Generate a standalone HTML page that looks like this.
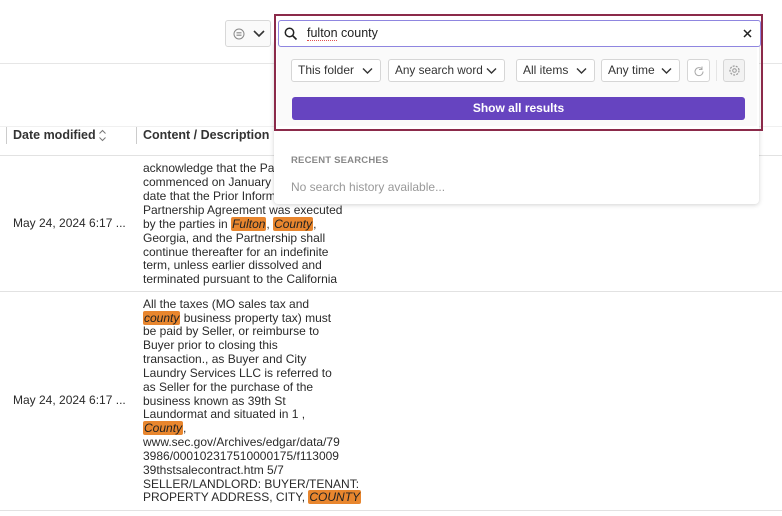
<!DOCTYPE html>
<html><head><style>
*{margin:0;padding:0;box-sizing:border-box}
body{width:782px;height:516px;background:#fff;font-family:"Liberation Sans",sans-serif;color:#2a2a2a;position:relative;overflow:hidden;font-size:12px}
.a{position:absolute}
.hl{background:#e8862e;font-style:italic;border-radius:2px;padding:0 1px;color:#222}
.ln{position:absolute;left:143px;white-space:nowrap;font-size:12px;line-height:14px}
.btn{position:absolute;top:59px;height:23px;border:1px solid #d6d6d6;border-radius:3px;background:#fff;font-size:12px;line-height:21px;padding-left:6px;color:#333;white-space:nowrap}
.btn svg{position:absolute;right:7px;top:7px}
</style></head><body>
<div class="a" style="left:0;top:63px;width:782px;height:1px;background:#e6e6e6"></div>
<div class="a" style="left:225px;top:20px;width:46px;height:27px;border:1px solid #d8d8d8;border-radius:3px;background:#fafafa">
<svg class="a" style="left:7px;top:7px" width="12" height="12"><circle cx="6" cy="6" r="5" fill="none" stroke="#888" stroke-width="1"/><path d="M3.5 4.5h5M3.5 6h5M3.5 7.5h5" stroke="#888" stroke-width=".8"/></svg>
<svg class="a" style="left:27px;top:8px" width="12" height="10"><path d="M1 2l5 5 5-5" fill="none" stroke="#333" stroke-width="1.6"/></svg></div>
<div class="a" style="left:0;top:126px;width:782px;height:1px;background:#f0f0f0"></div>
<div class="a" style="left:6px;top:127px;width:1px;height:17px;background:#ccc"></div>
<div class="a" style="left:136px;top:127px;width:1px;height:17px;background:#ccc"></div>
<div class="a" style="left:13px;top:128px;font-weight:bold;font-size:12.5px;color:#333">Date modified</div>
<svg class="a" style="left:98px;top:129px" width="9" height="13"><path d="M1.5 4.5l3-3 3 3M1.5 8.5l3 3 3-3" fill="none" stroke="#777" stroke-width="1"/></svg>
<div class="a" style="left:143px;top:128px;font-weight:bold;font-size:12.5px;color:#333">Content / Description</div>
<div class="a" style="left:0;top:155px;width:782px;height:1px;background:#e2e2e2"></div>
<div class="a" style="left:0;top:291px;width:782px;height:1px;background:#e2e2e2"></div>
<div class="a" style="left:0;top:510px;width:782px;height:1px;background:#e2e2e2"></div>
<div class="a" style="left:13px;top:216px;font-size:12px">May 24, 2024 6:17 ...</div>
<div class="a" style="left:13px;top:393px;font-size:12px">May 24, 2024 6:17 ...</div>
<div class="ln" style="top:161px">acknowledge that the Partnership</div>
<div class="ln" style="top:175px">commenced on January 1</div>
<div class="ln" style="top:189px">date that the Prior Information</div>
<div class="ln" style="top:203px">Partnership Agreement was executed</div>
<div class="ln" style="top:217px">by the parties in <span class="hl">Fulton</span>, <span class="hl">County</span>,</div>
<div class="ln" style="top:231px">Georgia, and the Partnership shall</div>
<div class="ln" style="top:245px">continue thereafter for an indefinite</div>
<div class="ln" style="top:258px">term, unless earlier dissolved and</div>
<div class="ln" style="top:272px">terminated pursuant to the California</div>
<div class="ln" style="top:297px">All the taxes (MO sales tax and</div>
<div class="ln" style="top:311px"><span class="hl">county</span> business property tax) must</div>
<div class="ln" style="top:324px">be paid by Seller, or reimburse to</div>
<div class="ln" style="top:338px">Buyer prior to closing this</div>
<div class="ln" style="top:352px">transaction., as Buyer and City</div>
<div class="ln" style="top:366px">Laundry Services LLC is referred to</div>
<div class="ln" style="top:380px">as Seller for the purchase of the</div>
<div class="ln" style="top:394px">business known as 39th St</div>
<div class="ln" style="top:407px">Laundormat and situated in 1 ,</div>
<div class="ln" style="top:421px"><span class="hl">County</span>,</div>
<div class="ln" style="top:435px">www.sec.gov/Archives/edgar/data/79</div>
<div class="ln" style="top:449px">3986/000102317510000175/f113009</div>
<div class="ln" style="top:463px">39thstsalecontract.htm 5/7</div>
<div class="ln" style="top:477px">SELLER/LANDLORD: BUYER/TENANT:</div>
<div class="ln" style="top:490px">PROPERTY ADDRESS, CITY, <span class="hl">COUNTY</span></div>
<!-- dropdown -->
<div class="a" style="left:274px;top:40px;width:485px;height:164px;background:#fff;border-radius:4px;box-shadow:0 1px 5px rgba(0,0,0,.18)"></div>
<div class="a" style="left:277px;top:42px;width:480px;height:84px;background:#fafafa"></div>
<div class="a" style="left:291px;top:155px;font-size:9.5px;font-weight:bold;color:#888;letter-spacing:.2px">RECENT SEARCHES</div>
<div class="a" style="left:291px;top:180px;font-size:12px;color:#999">No search history available...</div>
<div class="a" style="left:278px;top:20px;width:483px;height:27px;border:1px solid #8f86e0;border-radius:3px;background:#fff"></div>
<svg class="a" style="left:284px;top:27px" width="14" height="14"><circle cx="5.5" cy="5.5" r="4.2" fill="none" stroke="#222" stroke-width="1.5"/><path d="M8.5 8.5l4 4" stroke="#222" stroke-width="1.6"/></svg>
<div class="a" style="left:307px;top:26px;font-size:12.5px;color:#222">fulton county</div>
<div class="a" style="left:307px;top:40px;width:30px;border-bottom:1px dotted #e05050"></div>
<svg class="a" style="left:743px;top:29px" width="9" height="9"><path d="M1 1l7 7M8 1l-7 7" stroke="#222" stroke-width="1.5"/></svg>
<div class="btn" style="left:291px;width:90px">This folder<svg width="11" height="8"><path d="M1 1.5l4.5 4.5 4.5-4.5" fill="none" stroke="#333" stroke-width="1.4"/></svg></div>
<div class="btn" style="left:388px;width:117px;font-size:11.8px">Any search word<svg width="11" height="8"><path d="M1 1.5l4.5 4.5 4.5-4.5" fill="none" stroke="#333" stroke-width="1.4"/></svg></div>
<div class="btn" style="left:516px;width:79px">All items<svg width="11" height="8"><path d="M1 1.5l4.5 4.5 4.5-4.5" fill="none" stroke="#333" stroke-width="1.4"/></svg></div>
<div class="btn" style="left:601px;width:79px">Any time<svg width="11" height="8"><path d="M1 1.5l4.5 4.5 4.5-4.5" fill="none" stroke="#333" stroke-width="1.4"/></svg></div>
<div class="btn" style="left:687px;width:23px;padding:0"><svg style="left:5px;top:5px" width="12" height="12"><path d="M9 4A4 4 0 1 0 10 6.5" fill="none" stroke="#aaa" stroke-width="1"/><path d="M9 1.5v3h-3" fill="none" stroke="#aaa" stroke-width="1"/></svg></div>
<div class="a" style="left:716px;top:60px;width:1px;height:21px;background:#e5e5e5"></div>
<div class="btn" style="left:723px;width:22px;padding:0;background:#f2f2f2"><svg style="left:4px;top:4px" width="13" height="13"><circle cx="6.5" cy="6.5" r="4.5" fill="none" stroke="#999" stroke-width="1.2" stroke-dasharray="2 1.2"/><circle cx="6.5" cy="6.5" r="1.8" fill="none" stroke="#999" stroke-width="1"/></svg></div>
<div class="a" style="left:292px;top:97px;width:453px;height:23px;background:#6644c0;border-radius:3px;color:#fff;font-weight:bold;font-size:12px;text-align:center;line-height:23px">Show all results</div>
<div class="a" style="left:274px;top:14px;width:489px;height:117px;border:2px solid #8b2a4a"></div>
</body></html>
